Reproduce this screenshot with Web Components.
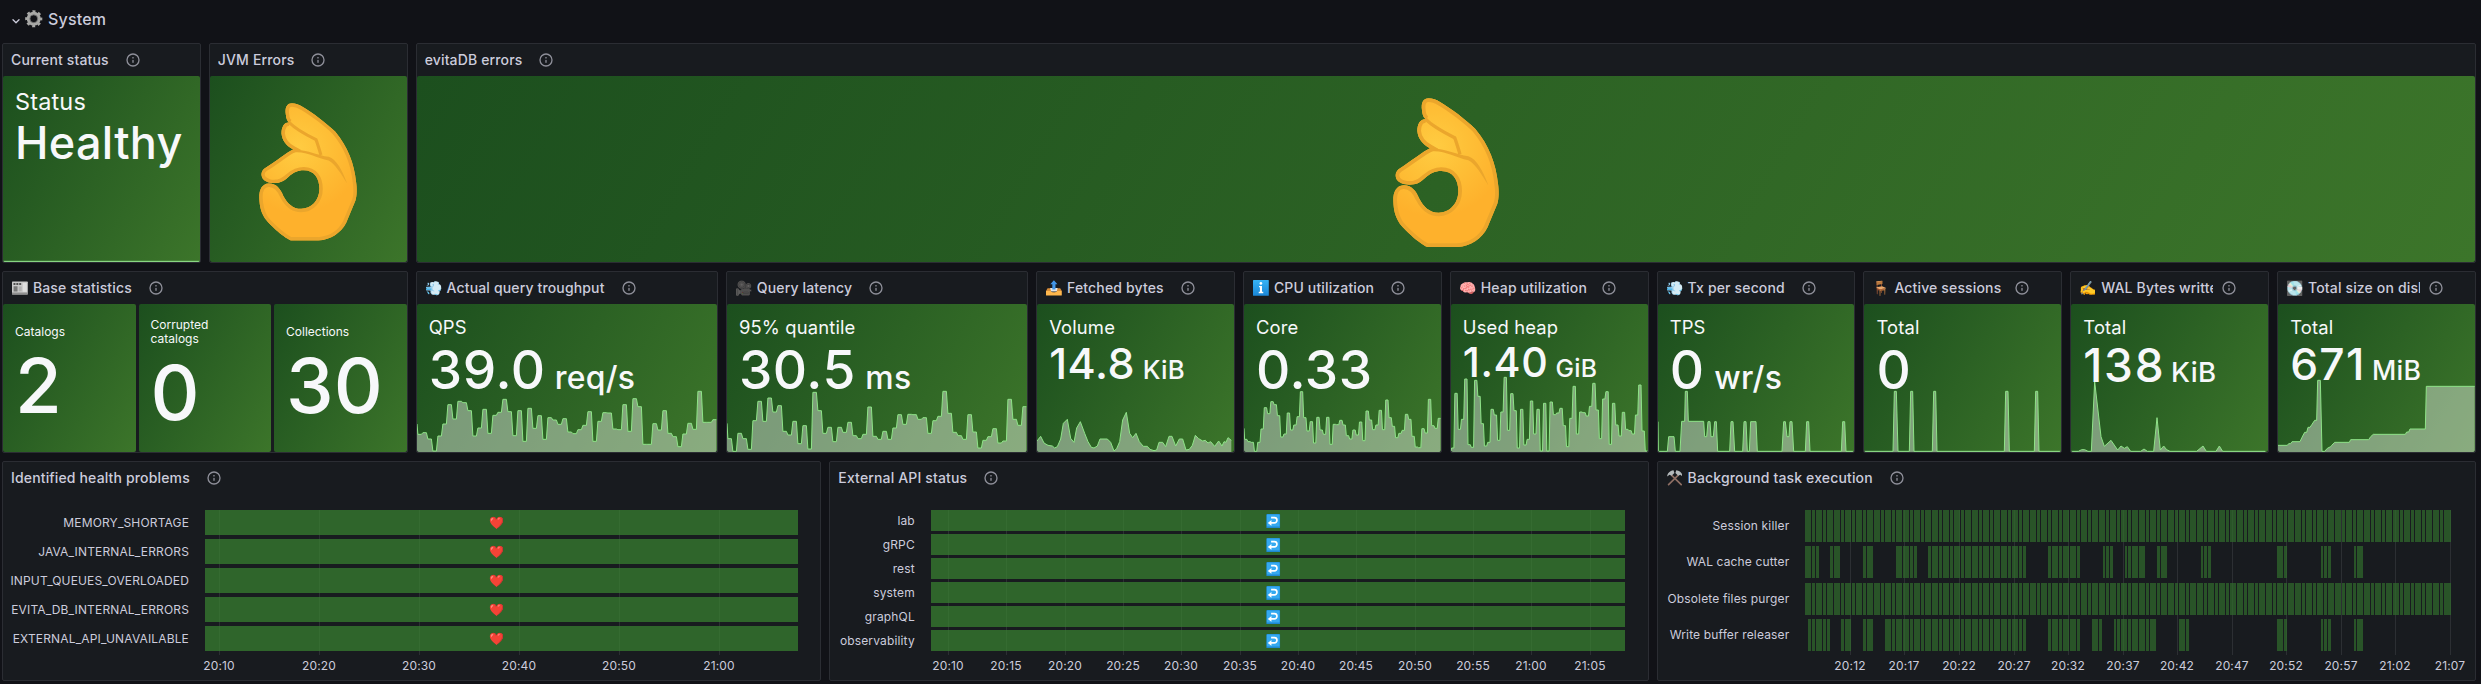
<!DOCTYPE html>
<html lang="en">
<head>
<meta charset="utf-8">
<title>System</title>
<style>
  html, body { margin: 0; height: 100%; background: #111217; }
  body { font-family: Inter, "Noto Sans", sans-serif; color: #ccccdc; overflow: hidden; }
</style>
</head>
<body>
<gf-dashboard>
  <gf-row-header slot="header"><gf-glyph slot="icon" name="gear"></gf-glyph>System</gf-row-header>

  <gf-panel span="2" rows="6" heading="Current status"><gf-stat label="Status" value="Healthy" ls="23.5" vs="45" track=".3"><gf-spark kind="flat"></gf-spark></gf-stat></gf-panel>
  <gf-panel span="2" rows="6" heading="JVM Errors"><gf-ok-hand width="98" height="137.5"></gf-ok-hand></gf-panel>
  <gf-panel span="20" rows="6" heading="evitaDB errors"><gf-ok-hand width="106" height="149"></gf-ok-hand></gf-panel>

  <gf-panel span="4" rows="5" glyph="news" heading="Base statistics">
    <gf-split>
      <gf-stat centered label="Catalogs" value="2" ls="12" vs="76"></gf-stat>
      <gf-stat centered label="Corrupted catalogs" value="0" ls="12" vs="76"></gf-stat>
      <gf-stat centered label="Collections" value="30" ls="12" vs="76"></gf-stat>
    </gf-split>
  </gf-panel>
  <gf-panel span="3" rows="5" icon="💨" heading="Actual query troughput"><gf-stat label="QPS" value="39.0" unit="req/s" ls="18.4" vs="53.2" track=".7" col="126"><gf-spark kind="qps"></gf-spark></gf-stat></gf-panel>
  <gf-panel span="3" rows="5" icon="🎥" heading="Query latency"><gf-stat label="95% quantile" value="30.5" unit="ms" ls="18.4" vs="53.2" track=".6" col="126.4"><gf-spark kind="latency"></gf-spark></gf-stat></gf-panel>
  <gf-panel span="2" rows="5" glyph="outbox" heading="Fetched bytes"><gf-stat label="Volume" value="14.8" unit="KiB" ls="18.4" vs="43" track=".6" col="93.5"><gf-spark kind="fetched"></gf-spark></gf-stat></gf-panel>
  <gf-panel span="2" rows="5" glyph="info" heading="CPU utilization"><gf-stat label="Core" value="0.33" ls="18.4" vs="53.2" track=".6"><gf-spark kind="cpu"></gf-spark></gf-stat></gf-panel>
  <gf-panel span="2" rows="5" icon="🧠" heading="Heap utilization"><gf-stat label="Used heap" value="1.40" unit="GiB" ls="18.4" vs="41.2" track=".6" col="92.6"><gf-spark kind="heap"></gf-spark></gf-stat></gf-panel>
  <gf-panel span="2" rows="5" icon="💨" heading="Tx per second"><gf-stat label="TPS" value="0" unit="wr/s" ls="18.4" vs="53.2" col="44.6"><gf-spark kind="tx"></gf-spark></gf-stat></gf-panel>
  <gf-panel span="2" rows="5" icon="🪑" heading="Active sessions"><gf-stat label="Total" value="0" ls="18.4" vs="53.2"><gf-spark kind="sessions"></gf-spark></gf-stat></gf-panel>
  <gf-panel span="2" rows="5" icon="✍️" heading="WAL Bytes written"><gf-stat label="Total" value="138" unit="KiB" ls="18.4" vs="46" track="1.7" col="87.7"><gf-spark kind="wal"></gf-spark></gf-stat></gf-panel>
  <gf-panel span="2" rows="5" icon="💽" heading="Total size on disk"><gf-stat label="Total" value="671" unit="MiB" ls="18.4" vs="44.3" track="1.3" col="81.8"><gf-spark kind="disk"></gf-spark></gf-stat></gf-panel>

  <gf-panel span="8" rows="6" heading="Identified health problems"><gf-timeline kind="health"></gf-timeline></gf-panel>
  <gf-panel span="8" rows="6" heading="External API status"><gf-timeline kind="api"></gf-timeline></gf-panel>
  <gf-panel span="8" rows="6" glyph="hammers" heading="Background task execution"><gf-timeline kind="tasks"></gf-timeline></gf-panel>
</gf-dashboard>

<script>
const GRADIENT = 'linear-gradient(120deg, #1c4f1e, #3c752a)';
const define = (name, render) => customElements.define(name, class extends HTMLElement {
  connectedCallback() {
    if (this.shadowRoot) return;
    this.attachShadow({ mode: 'open' }).innerHTML = render(this);
  }
});
const attr = (el, n, d = '') => el.getAttribute(n) ?? d;

const RETURN_MARK = `<rect width="16" height="16" rx="1" fill="#1e88d2"/><rect x=".7" y=".7" width="14.6" height="13.6" rx="1" fill="#35a9f0"/>
  <path d="M5.6 4.2H9.3A2.9 2.9 0 0 1 9.3 10.2H5" fill="none" stroke="#fff" stroke-width="1.9"/><path d="M1.8 10.2 6 6.9V13.5Z" fill="#fff"/>`;
const GLYPHS = {
  gear: `<g fill="none" stroke="#a8a8a6"><circle cx="8" cy="8" r="4.9" stroke-width="3.1"/><circle cx="8" cy="8" r="6.8" stroke-width="2.1" stroke-dasharray="2.75 2.59" stroke-dashoffset="1.37"/></g><circle cx="8" cy="8" r="3.6" fill="none" stroke="#6d6d6d" stroke-width=".8"/>`,
  news: `<rect x="0" y="1.6" width="16" height="13" rx=".6" fill="#c9c9c9"/><path d="M0 12.6h16v2H0z" fill="#8f8f8f"/>
    <path d="M1.5 3h2v2h-2zM4.4 3h2v2h-2zM7.3 3h2v2h-2z" fill="#4f4f4f"/><path d="M1.6 6.4h4v5.2h-4z" fill="#777"/><path d="M6.8 6.6h3v4.8h-3z" fill="#b0b0b0"/><path d="M11 3h4v9h-4z" fill="#dedede"/>`,
  outbox: `<path d="M1.6 8.4h12.8L16 11.2H0Z" fill="#d98e3a"/><path d="M4.2 8.2h7.6l-1 3.4H5.2Z" fill="#e6e6e6"/><path d="M0 11.1h4.8c.5 1.7 5.9 1.7 6.4 0H16V15.2a.6.6 0 0 1-.6.6H.6a.6.6 0 0 1-.6-.6Z" fill="#ffb74d"/>
    <path d="M8 .2 11.6 4.2H9.6V9.6H6.4V4.2H4.4Z" fill="#4296e8"/>`,
  info: `<defs><linearGradient id="g" x2="0" y2="1"><stop stop-color="#36b3f5"/><stop offset="1" stop-color="#1a86d6"/></linearGradient></defs><rect y="0" width="16" height="16" rx=".6" fill="url(#g)"/>
    <circle cx="8" cy="3.5" r="1.35" fill="#fff"/><path d="M6.1 6.1h3v5.8h1.3v1.4H5.8v-1.4H7V7.4h-.9Z" fill="#fff"/>`,
  hammers: `<g stroke-linecap="round" stroke="#8d6e63" stroke-width="1.7"><path d="M4.8 5.4 14.4 14.8"/><path d="M11.2 5.4 1.6 14.8"/></g>
    <path d="M.2 6.6C.4 3.4 2.6.9 6.6.3L7.5 3 4.6 5.9 2.6 4.9Z" fill="#b4b9bb"/><path d="M15.8 6.6C15.6 3.4 13.4.9 9.4.3L8.5 3l2.9 2.9 2-1Z" fill="#b4b9bb"/>`,
};

define('gf-glyph', el => `
  <style>:host { display: inline-block; width: 1em; height: 1em; white-space: normal; } svg { display: block; width: 100%; height: 100%; }</style>
  <svg viewBox="0 0 16 16">${GLYPHS[attr(el, 'name')]}</svg>`);

define('gf-dashboard', () => `
  <style>
    :host { display: flex; flex-direction: column; width: 2474px; padding-left: 2px; box-sizing: content-box; }
    .grid { display: grid; grid-template-columns: repeat(24, minmax(0, 1fr)); grid-auto-rows: 30px; gap: 8px; }
  </style>
  <slot name="header"></slot><div class="grid"><slot></slot></div>`);

define('gf-row-header', () => `
  <style>
    :host { display: flex; align-items: center; height: 43px; padding: 0 0 5px 10px; box-sizing: border-box;
      font-size: 16px; font-weight: 500; letter-spacing: .2px; }
    svg { width: 8px; height: 5px; margin: 4px 5px 0 0; }
    ::slotted(gf-glyph) { width: 17.5px; height: 17.5px; margin-right: 5.5px; }
  </style>
  <svg viewBox="0 0 8 5" fill="none" stroke="#ccccdc" stroke-width="1.3" stroke-linecap="round" stroke-linejoin="round"><path d="M1 .8 4 3.8 7 .8"/></svg>
  <slot name="icon"></slot><slot></slot>`);

define('gf-panel', el => `
  <style>
    :host { display: flex; flex-direction: column; box-sizing: border-box; min-width: 0; overflow: hidden;
      grid-column: span ${attr(el, 'span')}; grid-row: span ${attr(el, 'rows')};
      background: #181b1f; border: 1px solid #2b2d33; border-radius: 2px; }
    header { display: flex; align-items: center; flex: none; height: 32px; padding-left: 8px; padding-right: 55px; }
    h2 { margin: 0; padding-right: 8px; min-width: 0; overflow: hidden; white-space: pre;
      font-size: 14px; font-weight: 500; line-height: 22px; letter-spacing: .15px; }
    h2 gf-glyph { width: 15.8px; height: 15.8px; margin: 0 5.1px 0 1px; vertical-align: -2.8px; }
    .e { display: inline-block; width: 21.9px; }
    svg { flex: none; width: 16px; height: 16px; margin: 0 -24px 0 8px; fill: #8e8f99; }
    .body { display: flex; flex: 1; min-height: 0; }
    ::slotted(*) { flex: 1; min-width: 0; }
  </style>
  <header><h2>${el.hasAttribute('icon') ? `<span class="e">${attr(el, 'icon')}</span>` : ''}${el.hasAttribute('glyph') ? `<gf-glyph name="${attr(el, 'glyph')}"></gf-glyph>` : ''}${attr(el, 'heading')}</h2>
  <svg viewBox="0 0 24 24"><path d="M12 2a10 10 0 1 0 10 10A10 10 0 0 0 12 2Zm0 18a8 8 0 1 1 8-8 8 8 0 0 1-8 8Zm0-8.5a1 1 0 0 0-1 1v3a1 1 0 0 0 2 0v-3a1 1 0 0 0-1-1Zm0-4a1.25 1.25 0 1 0 1.25 1.25A1.25 1.25 0 0 0 12 7.5Z"/></svg></header>
  <div class="body"><slot></slot></div>`);

define('gf-ok-hand', el => `
  <style>
    :host { display: flex; align-items: center; justify-content: center; background: ${GRADIENT}; border-radius: 2px; }
    svg { width: ${attr(el, 'width')}px; height: ${attr(el, 'height')}px; margin-top: 6px; }
  </style>
  <svg viewBox="159 83 318 447" preserveAspectRatio="none">
    <defs>
      <radialGradient id="skin" gradientUnits="userSpaceOnUse" cx="285" cy="230" r="210"><stop offset="0" stop-color="#ffcc42"/><stop offset=".45" stop-color="#fec037"/><stop offset="1" stop-color="#feb12c"/></radialGradient>
      <path id="hand" d="M266 84C248 84 243 100 246 120C247 135 252 143 258 147C242 144 232 160 232 182C234 205 248 222 270 234C250 243 215 272 178 295C166 303 164 318 172 330C180 340 200 346 222 342C236 339 245 332 256 322C270 310 284 302 304 302C338 302 355 328 355 362C355 400 328 427 296 427C268 427 250 408 238 385C228 362 215 344 190 345C170 346 159 364 160 392C161 420 165 436 178 458C190 475 235 518 262 530L352 530C392 527 425 505 442 472L472 400C477 385 477 360 474 340C468 280 447 225 406 176C380 150 330 112 300 95C288 88 278 84 266 84Z"/>
      <clipPath id="inside"><use href="#hand"/></clipPath>
    </defs>
    <use href="#hand" fill="url(#skin)"/>
    <g clip-path="url(#inside)">
      <path d="M258 147C275 165 320 190 344 202C350 218 354 232 360 252" fill="none" stroke="#eba62c" stroke-width="10"/>
      <path d="M266 236C300 229 345 252 385 258C410 266 428 300 445 345C425 312 405 280 385 270C345 262 310 238 270 244Z" fill="#eba62c"/>
      <g fill="none" stroke="#eba62c"><use href="#hand" stroke-width="22"/></g>
    </g>
  </svg>`);

define('gf-split', () => `
  <style>:host { display: grid; grid-template-columns: repeat(3, minmax(0, 1fr)); gap: 3px; }</style><slot></slot>`);

define('gf-stat', el => `
  <style>
    :host { display: flex; flex-direction: column; position: relative; box-sizing: border-box; padding: 12px;
      justify-content: ${el.hasAttribute('centered') ? 'center' : 'flex-start'};
      background: ${GRADIENT}; border-radius: 2px; color: #f7f8fa; line-height: 1.2; overflow: hidden; }
    .l { font-size: ${attr(el, 'ls')}px; position: relative; letter-spacing: ${el.hasAttribute('centered') ? 0 : .15}px; }
    .v { display: flex; align-items: baseline; font-size: ${attr(el, 'vs')}px; font-weight: 500; position: relative; white-space: pre; z-index: 1; }
    .n { flex: none; width: ${el.hasAttribute('col') ? attr(el, 'col') + 'px' : 'auto'}; letter-spacing: ${attr(el, 'track', '0')}px; }
    .u { font-size: .6em; letter-spacing: .3px; line-height: 1; }
  </style>
  <slot></slot>
  <div class="l">${attr(el, 'label')}</div>
  <div class="v"><span class="n">${attr(el, 'value')}</span>${el.hasAttribute('unit') ? `<span class="u">${attr(el, 'unit')}</span>` : ''}</div>`);

/* Sparkline series. `steps` holds one level per sample, `points` holds x,y pairs;
   x0 / kx place the samples horizontally, base is the zero line, three units per pixel. */
const SPARKS = {
  flat: { x0: 0, kx: 1, base: 0, points: [0, -2, 400, -2] },
  qps: { x0: 3, kx: 3, base: 246, step: 15, first: 162, steps: [193,188,207,243,198,162,104,147,94,98,122,198,174,118,190,136,127,88,125,197,122,214,115,175,137,208,143,150,163,146,186,191,179,166,125,214,154,128,129,177,179,104,184,86,110,223,223,161,180,122,190,200,230,192,160,178,64,157,157,149] },
  latency: { x0: 9, kx: 3, base: 246, step: 15, first: 160, steps: [206,244,190,206,238,152,94,154,84,126,107,184,195,154,221,167,237,67,122,190,172,215,172,187,157,197,206,193,111,199,208,184,208,174,134,163,133,134,148,143,190,152,139,64,130,187,197,208,134,186,234,211,200,176,219,213,88,148,166,110] },
  fetched: { x0: 939, kx: 3, base: 246, points: [939,213,950,199,960,219,972,226,985,228,992,234,1000,230,1010,207,1018,160,1030,148,1040,205,1050,217,1058,174,1069,155,1082,190,1092,215,1102,232,1110,234,1120,228,1128,207,1150,207,1160,217,1170,243,1178,236,1187,215,1196,150,1207,127,1217,190,1226,203,1236,190,1246,215,1258,229,1270,229,1278,238,1290,242,1298,240,1305,217,1316,217,1325,230,1335,199,1344,199,1355,228,1366,207,1376,207,1386,240,1396,238,1405,226,1414,196,1424,206,1436,213,1444,211,1452,219,1460,215,1472,229,1484,213,1494,228,1500,215,1506,217,1512,203,1522,211] },
  cpu: { x0: 1126, kx: 2.148, base: 561, step: 7.05, first: 490, steps: [523,530,532,559,532,492,428,446,410,419,452,516,507,444,495,480,455,380,458,498,470,534,457,495,508,457,538,478,479,466,480,512,522,495,510,471,527,438,465,494,480,436,494,405,458,484,518,505,496,448,463,514,546,548,491,504,403,482,490,460] },
  heap: { x0: 33, kx: 3, base: 561, step: 9.85, first: 558, steps: [549,385,493,463,342,539,547,346,394,476,543,532,433,450,526,441,337,496,386,437,549,433,540,523,408,507,433,558,415,558,411,449,444,430,482,545,460,364,507,441,443,453,424,355,435,521,402,380,538,415,480,513,442,493,497,507,450,360,498,558] },
  tx: { x0: 654, kx: 3, base: 561, points: [654,470,655,559,682,559,686,515,702,515,706,559,720,559,725,469,734,469,736,379,742,379,745,469,791,469,794,515,800,515,804,470,810,470,813,515,820,515,824,470,829,470,833,559,869,559,873,470,879,470,884,559,908,559,912,470,918,470,922,559,928,559,932,470,948,470,952,559,1026,559,1031,470,1036,470,1041,515,1047,515,1050,470,1056,470,1061,559,1096,559,1100,470,1106,470,1110,559,1204,559,1208,470,1214,470,1218,559,1246,559] },
  sessions: { x0: 1275, kx: 3, base: 561, points: [1275,559,1362,559,1366,379,1372,379,1377,559,1411,559,1415,379,1421,379,1425,559,1480,559,1484,379,1490,379,1494,559,1696,559,1700,379,1707,379,1711,559,1786,559,1790,379,1796,379,1800,559,1866,559] },
  wal: { x0: 333, kx: 3, base: 561, points: [333,559,355,559,365,554,374,554,384,559,394,559,404,350,423,515,433,544,453,526,473,555,483,543,493,550,502,545,512,559,542,559,552,552,562,559,581,559,591,458,601,555,611,543,620,554,630,559,710,559,729,543,739,559,768,559,778,543,788,559,916,559] },
  disk: { x0: 954, kx: 3, base: 561, points: [954,541,982,541,986,536,992,536,996,530,1020,530,1026,517,1034,502,1040,502,1044,487,1050,487,1056,478,1064,466,1070,466,1073,346,1081,346,1086,559,1094,559,1102,550,1112,545,1114,542,1124,532,1168,532,1172,524,1226,524,1232,515,1240,508,1336,508,1340,501,1346,501,1350,492,1396,492,1399,364,1544,364] },
};

define('gf-spark', el => {
  const s = SPARKS[attr(el, 'kind')], H = 80, pts = [];
  const add = (x, y) => pts.push([((x - s.x0) / s.kx).toFixed(2), (H + (y - s.base) / 3).toFixed(2)]);
  if (s.steps) {
    add(s.x0, s.first);
    s.steps.forEach((y, i) => {
      add(s.x0 + s.step * (i + .18), y);
      add(s.x0 + s.step * (i + .88), y);
    });
  } else for (let i = 0; i < s.points.length; i += 2) add(s.points[i], s.points[i + 1]);
  const line = 'M' + pts.map(p => p.join(' ')).join('L');
  return `
  <style>
    :host { display: block; position: absolute; left: 0; right: 0; bottom: 0; height: ${H}px; }
    svg { display: block; width: 100%; height: 100%; }
  </style>
  <svg><path d="${line}L${pts.at(-1)[0]} ${H}L0 ${H}Z" fill="rgba(255,255,255,.4)"/>
  <path d="${line}" fill="none" stroke="#8fe388" stroke-width="1"/></svg>`;
});

const clipRanges = (a, b) => [...a.map(r => r.map(v => v / 3 - 155)), ...b.map(r => r.map(v => v / 3 + 255))];
const TIMELINES = {
  health: { left: 205, width: 593, right: 189, tops: [0, 29, 58, 87, 116], h: 25, heart: true, markX: 496.6,
    labels: ['MEMORY_SHORTAGE', 'JAVA_INTERNAL_ERRORS', 'INPUT_QUEUES_OVERLOADED', 'EVITA_DB_INTERNAL_ERRORS', 'EXTERNAL_API_UNAVAILABLE'],
    ticks: [219.5, 319.5, 419.5, 519.5, 619.5, 719.5], names: ['20:10', '20:20', '20:30', '20:40', '20:50', '21:00'], origin: 3 },
  api: { left: 931, width: 694, right: 914.5, tops: [0, 24, 48, 72, 96, 120], h: 21, markX: 1273.2,
    labels: ['lab', 'gRPC', 'rest', 'system', 'graphQL', 'observability'],
    ticks: [948.5, 1006.5, 1065.5, 1123.5, 1181.5, 1240.5, 1298.5, 1356.5, 1415.5, 1473.5, 1531.5, 1590.5],
    names: ['20:10', '20:15', '20:20', '20:25', '20:30', '20:35', '20:40', '20:45', '20:50', '20:55', '21:00', '21:05'], origin: 830 },
  tasks: { left: 1805, width: 646, right: 1789, tops: [0, 36, 73, 109], h: 32,
    labels: ['Session killer', 'WAL cache cutter', 'Obsolete files purger', 'Write buffer releaser'],
    ticks: [1850.5, 1904.5, 1959.5, 2014.5, 2068.5, 2123.5, 2177.5, 2232.5, 2286.5, 2341.5, 2395.5, 2450.5],
    names: ['20:12', '20:17', '20:22', '20:27', '20:32', '20:37', '20:42', '20:47', '20:52', '20:57', '21:02', '21:07'], origin: 1657.3,
    runs: [null,
      clipRanges([[465,507],[540,570],[639,669],[738,801],[834,1128],[1194,1290]], [[129,159],[195,258],[291,324],[423,453],[651,684],[783,813],[882,912]]),
      null,
      clipRanges([[474,540],[573,603],[639,669],[705,1128],[1194,1290]], [[96,126],[162,291],[357,390],[651,684],[783,813],[882,912]])] },
};

define('gf-timeline', el => {
  const t = TIMELINES[attr(el, 'kind')], X = x => x - t.left;
  const grid = t.ticks.map(x => `<path d="M${X(x)} 0V145" stroke="#2c2f33"/>`).join('');
  let bars = '';
  t.tops.forEach((y, r) => {
    if (!t.runs) { bars += `<rect x="0" y="${y}" width="${t.width}" height="${t.h}" fill="rgba(57,132,48,.7)"/>`; return; }
    const U = 3.629;
    for (let k = 0, a, b; (a = k ? Math.floor(1.587 * k + .54) : 0) < 178; k++) {
      b = Math.min(178, Math.floor(1.587 * (k + 1) + .54));
      const x1 = Math.round(a * U), x2 = Math.round(b * U) - (b < 178 ? 1 : 0);
      for (const [c, d] of t.runs[r] || [[0, 999]]) {
        const p = Math.max(x1, Math.round(c)), q = Math.min(x2, Math.round(d));
        if (q > p) bars += `<rect x="${p}" y="${y}" width="${q - p}" height="${t.h}" fill="rgba(48,108,44,.7)"/>`;
      }
    }
  });
  const marks = t.heart
    ? t.tops.map(y => `<text x="${X(t.markX)}" y="${y + t.h / 2 + 4.5}">❤️</text>`).join('')
    : t.markX ? t.tops.map(y => `<svg x="${X(t.markX) - 7}" y="${y + t.h / 2 - 6.5}" width="14" height="14" viewBox="0 0 16 16" shape-rendering="auto">${RETURN_MARK}</svg>`).join('') : '';
  const names = t.names.map((n, i) => `<text x="${X(t.ticks[i]) - .5}" y="160">${n}</text>`).join('');
  const rows = t.tops.map((y, i) => (t.tops[i + 1] ?? y + t.h) - y + 'px').join(' ');
  return `
  <style>
    :host { display: flex; padding-top: 16px; font-size: 12px; letter-spacing: .15px; }
    .labels { display: grid; grid-template-rows: ${rows}; width: ${t.right - t.origin}px; flex: none; height: 141px;
      white-space: nowrap; justify-items: end; line-height: ${t.runs ? t.h - 1 : t.h}px; }
    .plot { flex: none; margin-left: ${t.left - t.right}px; width: ${t.width}px; height: 165px; overflow: visible; }
    text { fill: #ccccdc; text-anchor: middle; font-size: 12px; }
  </style>
  <div class="labels">${t.labels.map(l => `<span>${l}</span>`).join('')}</div>
  <svg class="plot" shape-rendering="crispEdges">${grid}${bars}${marks}${names}</svg>`;
});
</script>
</body>
</html>
